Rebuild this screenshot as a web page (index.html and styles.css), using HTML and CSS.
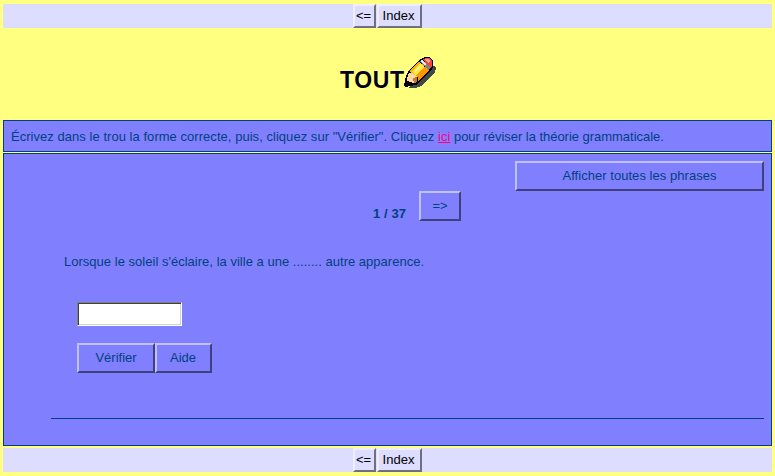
FILE: index.html
```html
<!DOCTYPE html>
<html lang="fr">
<head>
<meta charset="utf-8">
<title>TOUT</title>
<link rel="stylesheet" href="styles.css">
</head>
<body>
<nav class="navbar"><button class="nav-button back">&lt;=</button><button class="nav-button index">Index</button></nav>
<header class="title">
  <h1>TOUT</h1>
  <svg class="pencil" viewBox="0 0 32 32" shape-rendering="crispEdges" aria-hidden="true">
    <path fill="#404848" d="M9 28L23 13L30 9L32 11L31 16L17 29L12 31H4Z"/>
    <path fill="#000" d="M0 28L2 19L5 13L17 2L21 0H26L29 4V10L27 14L12 28L1 30Z"/>
    <path fill="#ffd8a0" d="M3 21L5 16L9 16L13 20L13 25L10 26L6 25L3 24Z"/>
    <path fill="#b87840" d="M9 21L13 20V25L10 26Z"/>
    <path fill="#ffb000" d="M5 14L15 5L20 8L10 18L8 16Z"/>
    <path fill="#ffe840" d="M8 15L16 6L21 10L12 19Z"/>
    <path fill="#ff9800" d="M12 19L21 9L25 13L14 24L14 21Z"/>
    <path fill="#fff8b0" d="M10 14L15 9L16 10L11 15Z"/>
    <path fill="#788888" d="M16 4L18 3L26 11L24 13L20 9Z"/>
    <path fill="#e0e8e8" d="M16 4L18 3L22 7L21 9Z"/>
    <path fill="#e84840" d="M19 2L22 1H25L28 4V9L26 11L23 8Z"/>
    <path fill="#ffa090" d="M20 2H24L26 4L24 6Z"/>
    <path fill="#000" d="M2 23L5 26L7 27L1 30L0 28Z"/>
  </svg>
</header>
<section class="panel instructions"><p><span class="lead">Écrivez dans le trou la forme correcte, puis, cliquez sur "Vérifier". Cliquez </span><a href="#">ici</a><span class="tail"> pour réviser la théorie grammaticale.</span></p></section>
<main class="panel exercise">
  <div class="show-row"><button class="button show-all">Afficher toutes les phrases</button></div>
  <div class="pager"><strong>1 / 37</strong><button class="button next">=&gt;</button></div>
  <p class="question">Lorsque le soleil s'éclaire, la ville a une ........ autre apparence.</p>
  <input class="answer" type="text" aria-label="Réponse">
  <div class="actions"><button class="button check">Vérifier</button><button class="button help">Aide</button></div>
  <hr>
</main>
<nav class="navbar bottom"><button class="nav-button back">&lt;=</button><button class="nav-button index">Index</button></nav>
</body>
</html>
```
FILE: styles.css
```css
* { box-sizing: border-box; }
body {
  margin: 0;
  padding: 4px 3px;
  background: #ffff80;
  color: #004080;
  font: 13px/16px "Liberation Sans", Arial, sans-serif;
  overflow: hidden;
}
p, h1 { margin: 0; }
button { font: inherit; padding: 0; white-space: nowrap; }
.navbar {
  display: flex;
  justify-content: center;
  gap: 1px;
  width: 769px;
  height: 24px;
  background: #ddf;
}
.navbar.bottom { margin-top: 2px; }
.nav-button {
  height: 24px;
  padding: 0 2px 1px 0;
  border: 2px solid;
  border-color: #eeeeff #6f6f80 #6f6f80 #eeeeff;
  background: #ddf;
  color: #000;
}
.back { width: 23px; }
.index { width: 45px; }
.title {
  display: flex;
  justify-content: center;
  width: 769px;
  height: 92px;
  padding: 29px 0 0 1px;
  color: #000020;
}
.title h1 {
  width: 64px;
  margin-top: 9px;
  font-size: 23px;
  line-height: 28px;
  letter-spacing: .6px;
}
.pencil { width: 32px; height: 32px; }
.panel { width: 769px; border: 1px solid #004080; background: #8080ff; }
.instructions { height: 32px; padding: 8px 7px 0; white-space: nowrap; }
.instructions a { color: #ff0080; }
.lead { letter-spacing: .04px; }
.tail { letter-spacing: -.03px; }
.exercise { height: 293px; margin-top: 1px; padding: 7px 7px 0 47px; }
.button {
  height: 30px;
  border: 2px solid;
  border-color: #c0c0ff #404080 #404080 #c0c0ff;
  background: #8080ff;
  color: #004080;
}
.show-row { display: flex; justify-content: flex-end; }
.show-all { width: 249px; letter-spacing: .04px; }
.pager { display: flex; height: 30px; margin-left: 322px; }
.pager strong { width: 46px; padding-top: 15px; letter-spacing: .1px; }
.next { width: 42px; }
.question { margin: 33px 0 0 13px; letter-spacing: .02px; }
.answer {
  display: block;
  width: 105px;
  height: 24px;
  margin: 32px 0 0 26px;
  padding: 1px;
  border: 1px solid;
  border-color: #808080 #fff #fff #808080;
  box-shadow: inset 1px 1px #404040, inset -1px -1px #d4d0c8;
  background: #fff;
}
.actions { display: flex; margin: 17px 0 0 26px; }
.check { width: 78px; }
.help { width: 57px; padding-right: 1px; }
hr { height: 1px; margin: 45px 0 0; border: 0; background: #004080; }
```
